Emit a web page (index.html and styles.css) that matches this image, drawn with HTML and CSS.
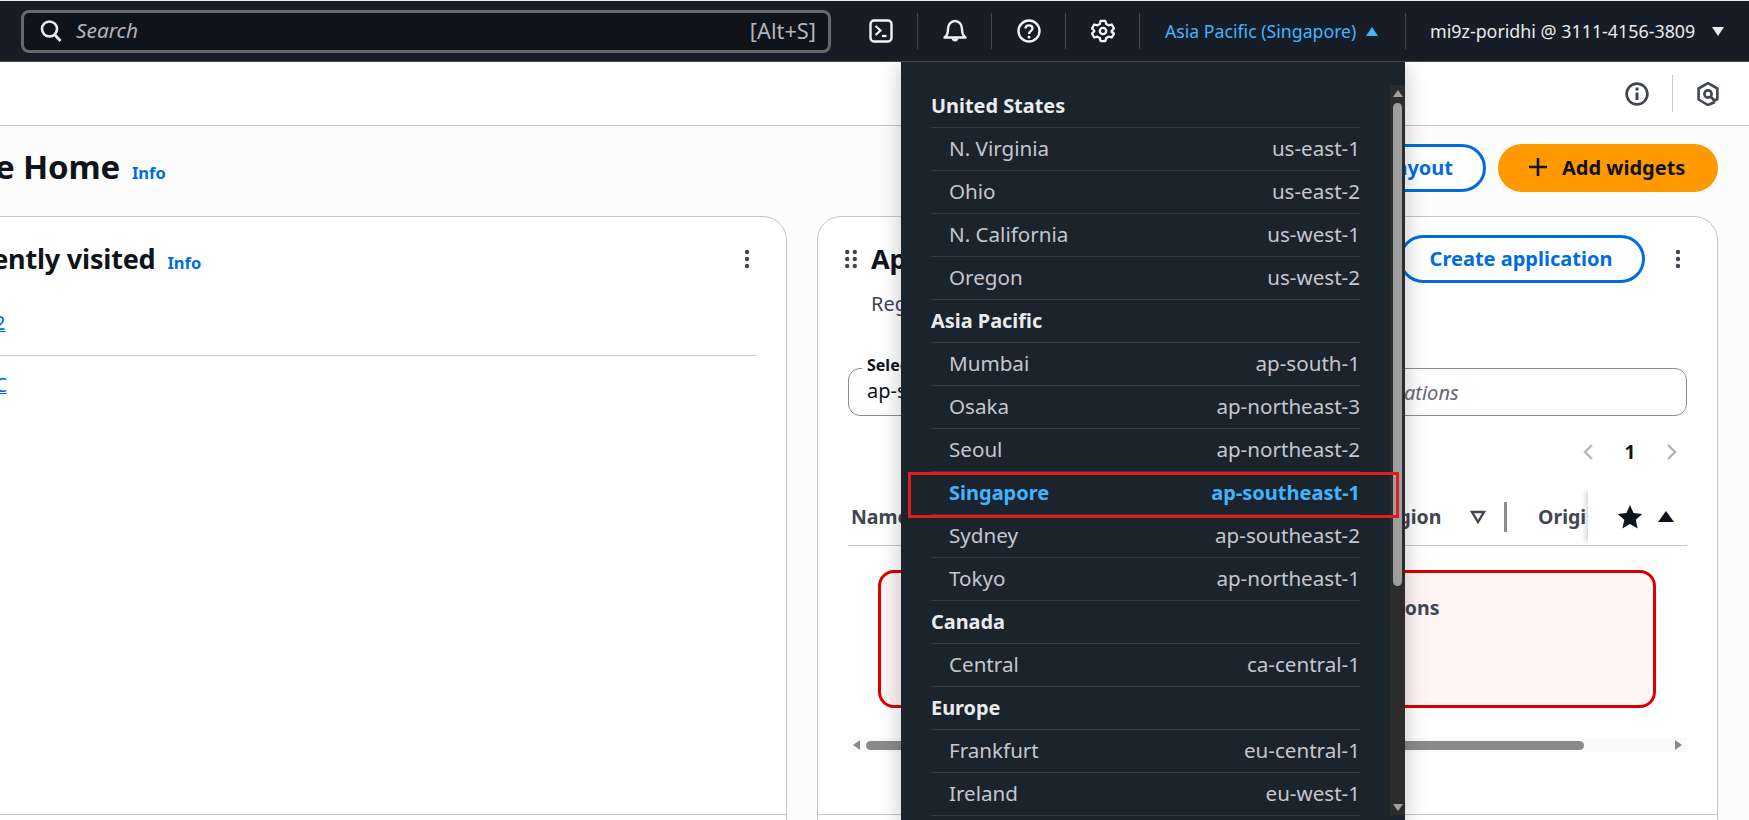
FILE: index.html
```html
<!DOCTYPE html>
<html lang="en">
<head>
<meta charset="utf-8">
<title>Console Home</title>
<link rel="stylesheet" href="styles.css">
</head>
<body>
<header class="topbar">
  <div class="search">
    <svg class="search-icon" viewBox="0 0 24 24" width="24" height="24"><circle cx="10.5" cy="10" r="7.5" fill="none" stroke="#e9ebed" stroke-width="2.6"/><path d="M15.5 15.5 L21.5 22" stroke="#e9ebed" stroke-width="2.8" fill="none"/></svg>
    <span class="search-text">Search</span>
    <span class="search-key">[Alt+S]</span>
  </div>
  <div class="top-icons">
    <div class="top-icon">
      <svg viewBox="0 0 24 24" width="24" height="24"><rect x="1.5" y="1.5" width="21" height="21" rx="3.5" fill="none" stroke="#f3f3f7" stroke-width="2.4"/><path d="M6.5 7 L11.5 11.5 L6.5 16" fill="none" stroke="#f3f3f7" stroke-width="2.2"/><path d="M13 17 H17.5" stroke="#f3f3f7" stroke-width="2.2"/></svg>
    </div>
    <div class="top-icon">
      <svg viewBox="0 0 24 24" width="24" height="24"><path d="M1.5 18.5 C4.5 16.5 5 14.5 5 10 C5 5.5 8 2 12 2 C16 2 19 5.5 19 10 C19 14.5 19.5 16.5 22.5 18.5 Z" fill="none" stroke="#f3f3f7" stroke-width="2.4" stroke-linejoin="round"/><path d="M8.5 19.5 C9 23.5 15 23.5 15.5 19.5 Z" fill="#f3f3f7"/></svg>
    </div>
    <div class="top-icon">
      <svg viewBox="0 0 24 24" width="24" height="24"><circle cx="12" cy="12" r="10.5" fill="none" stroke="#f3f3f7" stroke-width="2.4"/><path d="M8.5 9.5 C8.5 5.2 15.5 5.2 15.5 9.5 C15.5 12.3 12 12 12 15" fill="none" stroke="#f3f3f7" stroke-width="2.3"/><circle cx="12" cy="18" r="1.5" fill="#f3f3f7"/></svg>
    </div>
    <div class="top-icon">
      <svg viewBox="0 0 24 24" width="24" height="24"><path d="M9.7 1.8 H14.3 L15.2 4.9 L17.6 6.3 L20.8 5.5 L23 9.4 L20.7 11.7 V13.3 L20.7 12.3 L23 14.6 L20.8 18.5 L17.6 17.7 L15.2 19.1 L14.3 22.2 H9.7 L8.8 19.1 L6.4 17.7 L3.2 18.5 L1 14.6 L3.3 12.3 V11.7 L1 9.4 L3.2 5.5 L6.4 6.3 L8.8 4.9 Z" fill="none" stroke="#f3f3f7" stroke-width="2.3" stroke-linejoin="round"/><circle cx="12" cy="12" r="3.2" fill="none" stroke="#f3f3f7" stroke-width="2.3"/></svg>
    </div>
  </div>
  <div class="region-btn"><span>Asia Pacific (Singapore)</span><i class="tri-up"></i></div>
  <div class="account-btn"><span>mi9z-poridhi @ 3111-4156-3809</span><i class="tri-down"></i></div>
</header>

<div class="subbar">
  <svg viewBox="0 0 24 24" width="24" height="24"><circle cx="12" cy="12" r="10.4" fill="none" stroke="#424650" stroke-width="2.6"/><circle cx="12" cy="7" r="1.7" fill="#424650"/><path d="M12 10.5 V18" stroke="#424650" stroke-width="3"/></svg>
  <i class="sub-sep"></i>
  <svg viewBox="0 0 24 24" width="24" height="24"><path d="M19 20 L12 23 L2.6 17.5 V6.5 L12 1.2 L21.4 6.5 V17 L17 19.5" fill="none" stroke="#424650" stroke-width="2.6" stroke-linejoin="round"/><circle cx="12" cy="12" r="3.6" fill="none" stroke="#424650" stroke-width="2.6"/><path d="M15 15 L18.5 18.5" stroke="#424650" stroke-width="2.6"/></svg>
</div>

<main class="page">
  <div class="page-head">
    <div class="title-wrap">
      <h1 class="page-title">Console Home</h1><a class="info">Info</a>
    </div>
    <div class="head-actions">
      <button class="btn btn-outline">Reset to default layout</button>
      <button class="btn btn-primary"><svg viewBox="0 0 20 20" width="20" height="20"><path d="M10 1 V19 M1 10 H19" stroke="#0f141a" stroke-width="2.6" fill="none"/></svg><span>Add widgets</span></button>
    </div>
  </div>

  <div class="cards">
    <section class="card card-left">
      <div class="card-body left-body">
        <div class="left-head">
          <div class="title-wrap">
            <h2 class="card-title">Recently visited</h2><a class="info">Info</a>
          </div>
          <svg class="kebab" viewBox="0 0 6 20" width="6" height="20"><circle cx="3" cy="3" r="2.2" fill="#424650"/><circle cx="3" cy="10" r="2.2" fill="#424650"/><circle cx="3" cy="17" r="2.2" fill="#424650"/></svg>
        </div>
        <ul class="visited">
          <li><a>EC2</a></li>
          <li><a>VPC</a></li>
        </ul>
      </div>
    </section>

    <section class="card card-right">
      <div class="card-body right-body">
        <div class="app-head">
          <svg class="grip" viewBox="0 0 12 20" width="12" height="20"><g fill="#424650"><circle cx="2.2" cy="3" r="2.2"/><circle cx="9.8" cy="3" r="2.2"/><circle cx="2.2" cy="10" r="2.2"/><circle cx="9.8" cy="10" r="2.2"/><circle cx="2.2" cy="17" r="2.2"/><circle cx="9.8" cy="17" r="2.2"/></g></svg>
          <h2 class="card-title">Applications</h2>
          <button class="btn btn-outline btn-create">Create application</button>
          <svg class="kebab" viewBox="0 0 6 20" width="6" height="20"><circle cx="3" cy="3" r="2.2" fill="#424650"/><circle cx="3" cy="10" r="2.2" fill="#424650"/><circle cx="3" cy="17" r="2.2" fill="#424650"/></svg>
        </div>
        <p class="app-sub">Region</p>
        <div class="filters">
          <div class="select-box"><span class="select-label">Select Region</span><span>ap-southeast-1</span></div>
          <div class="filter-box"><span>Find applications</span></div>
        </div>
        <div class="pager">
          <svg viewBox="0 0 12 18" width="12" height="18"><path d="M10 2 L3 9 L10 16" fill="none" stroke="#b4b4bb" stroke-width="2.4"/></svg>
          <b>1</b>
          <svg viewBox="0 0 12 18" width="12" height="18"><path d="M2 2 L9 9 L2 16" fill="none" stroke="#b4b4bb" stroke-width="2.4"/></svg>
        </div>
        <div class="table-head">
          <span class="th-name">Name</span>
          <span class="th-region">Region</span>
          <svg class="th-sort" viewBox="0 0 16 14" width="16" height="14"><path d="M2 2 H14 L8 12 Z" fill="none" stroke="#424650" stroke-width="2.4"/></svg>
          <i class="th-sep"></i>
          <span class="th-origin">Origi</span>
          <div class="th-sticky">
            <svg viewBox="0 0 24 24" width="26" height="26"><path d="M12 1 L15.3 8.4 L23.4 9.2 L17.3 14.6 L19 22.6 L12 18.5 L5 22.6 L6.7 14.6 L.6 9.2 L8.7 8.4 Z" fill="#0f141a"/></svg>
            <i class="tri-sort"></i>
          </div>
        </div>
        <div class="alert"><span class="alert-title">Error loading applications</span></div>
        <div class="hscroll">
          <i class="hs-left"></i><i class="hs-thumb"></i><i class="hs-right"></i>
        </div>
      </div>
    </section>
  </div>
</main>

<nav class="region-menu">
  <div class="menu-scroll">
    <i class="sb-up"></i><i class="sb-thumb"></i><i class="sb-down"></i>
  </div>
  <div class="highlight"></div>
  <div class="menu-list">
    <div class="group">United States</div>
    <div class="row"><span>N. Virginia</span><span>us-east-1</span></div>
    <div class="row"><span>Ohio</span><span>us-east-2</span></div>
    <div class="row"><span>N. California</span><span>us-west-1</span></div>
    <div class="row"><span>Oregon</span><span>us-west-2</span></div>
    <div class="group">Asia Pacific</div>
    <div class="row"><span>Mumbai</span><span>ap-south-1</span></div>
    <div class="row"><span>Osaka</span><span>ap-northeast-3</span></div>
    <div class="row"><span>Seoul</span><span>ap-northeast-2</span></div>
    <div class="row row-active"><span>Singapore</span><span>ap-southeast-1</span></div>
    <div class="row"><span>Sydney</span><span>ap-southeast-2</span></div>
    <div class="row"><span>Tokyo</span><span>ap-northeast-1</span></div>
    <div class="group">Canada</div>
    <div class="row"><span>Central</span><span>ca-central-1</span></div>
    <div class="group">Europe</div>
    <div class="row"><span>Frankfurt</span><span>eu-central-1</span></div>
    <div class="row"><span>Ireland</span><span>eu-west-1</span></div>
  </div>
</nav>
</body>
</html>
```
FILE: styles.css
```css
* { box-sizing: border-box; }
html, body { margin: 0; padding: 0; }
body {
  width: 1749px; height: 820px; overflow: hidden; position: relative;
  background: #fff; color: #0f141a;
  font-family: "Noto Sans", "Open Sans", sans-serif; font-size: 18px;
}
h1, h2, p, ul { margin: 0; padding: 0; }
ul { list-style: none; }
button { font-family: inherit; }
i { display: block; }

/* top bar */
.topbar {
  height: 62px; background: #161d26; display: flex; align-items: center;
  border-top: 1px solid #e9ebed; border-bottom: 1px solid #424650;
  color: #e9ebed; position: relative; z-index: 3;
}
.search {
  display: flex; align-items: center; flex: none; width: 810px; height: 43px; margin-left: 21px;
  background: #0f141a; border: 3px solid #656871; border-radius: 8px; padding: 0 12px 0 15px;
}
.search-icon { flex: none; }
.search-text { margin-left: 13px; font-style: italic; font-size: 20.8px; color: #b4b4bb; padding-bottom: 2px; }
.search-key { margin-left: auto; font-size: 21.8px; color: #b4b4bb; padding-bottom: 2px; }
.top-icons { display: flex; margin-left: 13px; }
.top-icon {
  width: 74px; height: 36px; display: flex; align-items: center; justify-content: center;
  border-right: 1px solid #424650;
}
.region-btn {
  width: 266px; display: flex; align-items: center; padding-left: 25px; gap: 10px; flex: none;
  font-size: 17.7px; color: #42b4ff; height: 36px; border-right: 1px solid #424650;
}
.account-btn { display: flex; align-items: center; gap: 17px; padding-left: 24px; font-size: 17.85px; color: #e9ebed; white-space: nowrap; }
.tri-up { width: 0; height: 0; border: 6.5px solid transparent; border-top: 0; border-bottom: 9px solid #42b4ff; }
.tri-down { width: 0; height: 0; border: 6.5px solid transparent; border-bottom: 0; border-top: 9px solid #e9ebed; }

/* sub bar */
.subbar {
  height: 64px; background: #fff; border-bottom: 1px solid #c6c6cd; display: flex; align-items: center;
  justify-content: flex-end; padding-right: 29px;
}
.sub-sep { width: 1px; height: 37px; background: #c6c6cd; margin: 0 23px 0 23px; }

/* page */
.page { height: 694px; background: #fcfcfd; overflow: hidden; }
.page-head { display: flex; justify-content: space-between; height: 90px; padding: 18px 31px 0 0; margin-left: -114px; }
.title-wrap { display: flex; align-items: baseline; gap: 12px; }
.page-title { font-size: 33px; font-weight: 700; line-height: 46px; white-space: nowrap; letter-spacing: -0.2px; }
.info { color: #006ce0; font-size: 16.5px; font-weight: 700; }
.head-actions { display: flex; gap: 12px; height: 48px; }
.btn { height: 48px; border-radius: 24px; font-size: 20px; font-weight: 700; padding: 0 30px 2px; white-space: nowrap; }
.btn-outline { background: #fff; color: #006ce0; border: 3px solid #006ce0; }
.btn-primary { background: #ff9900; color: #0f141a; border: 0; display: flex; align-items: center; gap: 14px; width: 220px; }

.cards { display: flex; gap: 30px; margin-left: -100px; }
.card { background: #fff; border: 1px solid #c6c6cd; border-radius: 24px; height: 640px; flex: none; }
.card-left { width: 887px; }
.card-right { width: 901px; }
.card-body { height: 598px; border-bottom: 1px solid #c6c6cd; padding: 18px 30px 0; }
.left-body { padding-left: 71px; }
.left-head { display: flex; justify-content: space-between; align-items: center; height: 48px; padding-right: 6px; }
.left-head .title-wrap { margin-left: -27px; padding-bottom: 2px; }
.kebab { flex: none; }
.card-title { font-size: 27px; font-weight: 700; white-space: nowrap; letter-spacing: -0.2px; }
.visited li { line-height: 24px; }
.visited li:first-child { padding: 28px 0 20px; border-bottom: 1px solid #c6c6cd; }
.visited li:last-child { padding-top: 17px; }
.visited a { color: #006ce0; text-decoration: underline; font-size: 19px; }

/* applications */
.app-head { display: flex; align-items: center; height: 48px; }
.grip { flex: none; margin-left: -3px; }
.app-head .card-title { margin-left: 14px; padding-bottom: 2px; }
.btn-create { margin-left: auto; width: 246px; padding: 0 2px 2px 0; }
.app-head .kebab { margin: 0 6px 0 30px; }
.app-sub { margin: 9px 0 0 23px; line-height: 24px; color: #424650; font-size: 20px; }
.filters { display: flex; gap: 12px; margin-top: 52px; height: 48px; }
.select-box {
  position: relative; width: 432px; border: 1px solid #8c8c94; border-radius: 12px; background: #fff;
  display: flex; align-items: center; padding: 0 0 4px 18px; font-size: 20px;
}
.select-label {
  position: absolute; left: 13px; top: -14px; padding: 0 5px; background: #fff;
  font-size: 16px; font-weight: 700; line-height: 20px; white-space: nowrap;
}
.filter-box {
  flex: 1; border: 1px solid #8c8c94; border-radius: 12px; background: #fff;
  display: flex; align-items: center; padding-left: 14px; font-style: italic; color: #656871; font-size: 20px;
}
.pager { display: flex; align-items: center; justify-content: flex-end; gap: 30px; height: 36px; margin-top: 18px; padding-right: 9px; }
.pager b { width: 12px; text-align: center; font-size: 19px; }
.table-head { display: flex; align-items: center; height: 58px; margin-top: 18px; border-bottom: 1px solid #c6c6cd; font-weight: 700; color: #424650; font-size: 19.5px; }
.th-name { width: 526px; padding-left: 3px; }
.th-region { width: 96px; }
.th-sort { flex: none; width: 16px; }
.th-sep { width: 3px; height: 30px; margin-left: 18px; background: #8c8c94; flex: none; }
.th-origin { width: 81px; padding-left: 31px; flex: none; white-space: nowrap; }
.th-sticky { display: flex; align-items: center; gap: 15px; flex: 1; height: 100%; padding-left: 29px; background: #fff; clip-path: inset(0 0 0 -12px); box-shadow: -5px 0 6px -3px rgba(0, 7, 22, .18); }
.th-sticky svg { flex: none; }
.tri-sort { width: 0; height: 0; border: 8px solid transparent; border-top: 0; border-bottom: 11px solid #0f141a; }
.alert { margin: 24px 31px 0 30px; height: 138px; border: 3px solid #db0000; border-radius: 16px; background: #fff5f5; padding: 23px 0 0 308px; }
.alert-title { font-weight: 700; color: #424650; font-size: 19.5px; line-height: 24px; white-space: nowrap; }
.hscroll { display: flex; align-items: center; height: 14px; margin-top: 30px; background: #fafafa; }
.hs-left { width: 0; height: 0; border: 5px solid transparent; border-left: 0; border-right: 7px solid #8a8a8a; margin-left: 5px; }
.hs-thumb { width: 718px; height: 9px; border-radius: 5px; background: #8a8a8a; margin-left: 6px; }
.hs-right { width: 0; height: 0; border: 5px solid transparent; border-right: 0; border-left: 7px solid #8a8a8a; margin-left: 91px; }

/* region menu */
.region-menu {
  position: absolute; left: 901px; top: 62px; width: 504px; height: 758px; background: #1b232d;
  box-shadow: 0 4px 20px 1px rgba(0, 7, 22, .22); z-index: 2; overflow: hidden;
}
.menu-list { padding: 23px 45px 0 30px; }
.group, .row { height: 43px; border-bottom: 1px solid #333843; display: flex; align-items: center; padding-bottom: 2px; }
.group { font-weight: 700; color: #e9ebed; font-size: 19.9px; }
.row { justify-content: space-between; padding-left: 18px; color: #c6c6cd; font-size: 20.6px; }
.row-active { color: #42b4ff; font-weight: 700; font-size: 20px; }
.menu-scroll {
  position: absolute; right: 0; top: 23px; width: 15px; height: 730px; background: #2c2c2c;
  display: flex; flex-direction: column; align-items: center; padding: 5px 0 4px;
}
.sb-up { width: 0; height: 0; border: 5px solid transparent; border-top: 0; border-bottom: 7px solid #9f9f9f; }
.sb-thumb { width: 9px; height: 483px; margin-top: 6px; background: #9f9f9f; border-radius: 5px; }
.sb-down { width: 0; height: 0; border: 5px solid transparent; border-bottom: 0; border-top: 7px solid #9f9f9f; margin-top: auto; }
.highlight { position: absolute; left: 7px; top: 410px; width: 491px; height: 46px; border: 3px solid #e01e1e; z-index: 1; }
```
